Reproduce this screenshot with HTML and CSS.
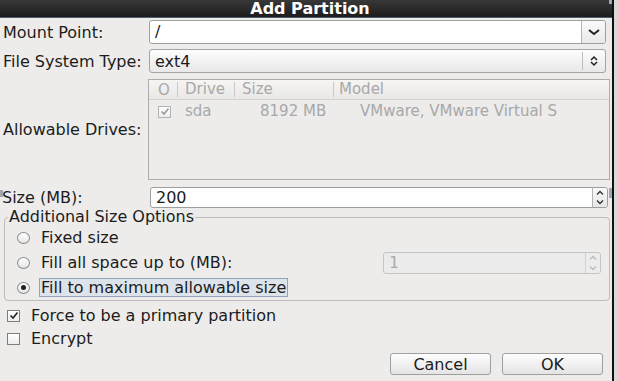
FILE: index.html
```html
<!DOCTYPE html>
<html lang="en">
<head>
    <meta charset="UTF-8">
    <title>Add Partition</title>
    <link rel="stylesheet" href="styles.css">
</head>
<body>

    <div class="window">
        <div class="titlebar">Add Partition</div>

        <div class="dialog">
            <!-- Mount point -->
            <div class="row row-mount">
                <div class="label">Mount Point:</div>
                <div class="combo-entry">
                    <div class="entry-text">/</div>
                    <div class="combo-btn">
                        <svg width="12" height="8" viewBox="0 0 12 8"><path d="M1 2 L6 6 L11 2" fill="none" stroke="#222" stroke-width="2"/></svg>
                    </div>
                </div>
            </div>

            <!-- File system -->
            <div class="row row-fs">
                <div class="label">File System Type:</div>
                <div class="combo-box">
                    <div class="combo-text">ext4</div>
                    <div class="combo-sep"></div>
                    <div class="combo-arrows">
                        <svg width="10" height="12" viewBox="0 0 10 12"><path d="M2 5 L5 2 L8 5 M2 7 L5 10 L8 7" fill="none" stroke="#222" stroke-width="1.5"/></svg>
                    </div>
                </div>
            </div>

            <!-- Drives -->
            <div class="row row-drives">
                <div class="label">Allowable Drives:</div>
                <div class="tree">
                    <div class="tree-head">
                        <div class="col col-sel">O</div>
                        <div class="col col-drive">Drive</div>
                        <div class="col col-size">Size</div>
                        <div class="col col-model">Model</div>
                    </div>
                    <div class="tree-row">
                        <div class="col col-sel"><span class="check check-off">
                            <svg width="10" height="9" viewBox="0 0 10 9"><path d="M1.5 4.5 L4 7 L8.5 1.5" fill="none" stroke="#9a9a9a" stroke-width="1.6"/></svg>
                        </span></div>
                        <div class="col col-drive">sda</div>
                        <div class="col col-size">8192 MB</div>
                        <div class="col col-model">VMware, VMware Virtual S</div>
                    </div>
                </div>
            </div>

            <!-- Size -->
            <div class="row row-size">
                <div class="label label-size">Size (MB):</div>
                <div class="spin">
                    <div class="spin-text">200</div>
                    <div class="spin-btns">
                        <svg width="10" height="6" viewBox="0 0 10 6"><path d="M2 4.5 L5 1.5 L8 4.5" fill="none" stroke="#333" stroke-width="1.4"/></svg>
                        <svg width="10" height="6" viewBox="0 0 10 6"><path d="M2 1.5 L5 4.5 L8 1.5" fill="none" stroke="#333" stroke-width="1.4"/></svg>
                    </div>
                </div>
            </div>

            <!-- Additional size options -->
            <fieldset class="options">
                <legend>Additional Size Options</legend>
                <div class="option">
                    <span class="radio"></span>
                    <span class="option-text">Fixed size</span>
                </div>
                <div class="option">
                    <span class="radio"></span>
                    <span class="option-text">Fill all space up to (MB):</span>
                    <div class="spin spin-disabled">
                        <div class="spin-text">1</div>
                        <div class="spin-btns">
                            <svg width="10" height="6" viewBox="0 0 10 6"><path d="M2 4.5 L5 1.5 L8 4.5" fill="none" stroke="#bbb" stroke-width="1.4"/></svg>
                            <svg width="10" height="6" viewBox="0 0 10 6"><path d="M2 1.5 L5 4.5 L8 1.5" fill="none" stroke="#bbb" stroke-width="1.4"/></svg>
                        </div>
                    </div>
                </div>
                <div class="option">
                    <span class="radio radio-on"></span>
                    <span class="option-text focused">Fill to maximum allowable size</span>
                </div>
            </fieldset>

            <!-- Checks -->
            <div class="checkrow checkrow-first">
                <span class="check">
                    <svg width="10" height="9" viewBox="0 0 10 9"><path d="M1.5 4.5 L4 7 L8.5 1.5" fill="none" stroke="#222" stroke-width="1.6"/></svg>
                </span>
                <span>Force to be a primary partition</span>
            </div>
            <div class="checkrow">
                <span class="check"></span>
                <span>Encrypt</span>
            </div>

            <div class="buttons">
                <button class="btn">Cancel</button>
                <button class="btn">OK</button>
            </div>
        </div>

        <!-- resize grips drawn over the edge -->
        <div class="grip grip-top"></div>
        <div class="grip grip-right"></div>
        <div class="grip grip-left"></div>
    </div>

</body>
</html>
```

FILE: styles.css
```css
body {
    margin: 0;
    padding: 0;
    background-color: #d9d9d9;
    font-family: 'DejaVu Sans', 'Liberation Sans', sans-serif;
    font-size: 16px;
    color: #1c1c1c;
}

.window {
    position: relative;
    width: 612px;
    height: 381px;
    border-right: 2px solid #111;
    background-color: #edeceb;
    overflow: hidden;
}

.titlebar {
    height: 17px;
    line-height: 17px;
    background: linear-gradient(#383838, #1c1c1c);
    border-bottom: 1px solid #4d5d72;
    color: #fff;
    font-weight: bold;
    text-align: center;
    padding-left: 8px;
}

.dialog {
    padding: 2px 0 0 0;
}

.row {
    display: flex;
    align-items: center;
}

.label {
    width: 149px;
    padding-left: 3px;
    box-sizing: border-box;
    flex-shrink: 0;
}

.row-fs {
    margin-top: 5px;
}

.row-drives {
    margin-top: 6px;
}

.row-size {
    margin-top: 7px;
}

.label-size {
    padding-left: 2px;
    width: 150px;
}

/* mount point combo */
.combo-entry {
    display: flex;
    flex: 1;
    height: 24px;
    margin-right: 6px;
    border: 1px solid #9e9e9e;
    border-radius: 3px;
    box-sizing: border-box;
    background: #fff;
}

.entry-text {
    flex: 1;
    padding-left: 5px;
    line-height: 22px;
}

.combo-btn {
    width: 23px;
    border-left: 1px solid #b4b4b4;
    background: linear-gradient(#fafafa, #e9e9e9);
    border-radius: 0 3px 3px 0;
    display: flex;
    align-items: center;
    justify-content: center;
}

/* fs type combo */
.combo-box {
    display: flex;
    align-items: center;
    flex: 1;
    height: 24px;
    margin-right: 6px;
    border: 1px solid #a4a4a4;
    border-radius: 3px;
    box-sizing: border-box;
    background: linear-gradient(#fdfdfd, #e8e8e8);
}

.combo-text {
    flex: 1;
    padding-left: 5px;
}

.combo-sep {
    width: 1px;
    height: 18px;
    background: #bcbcbc;
}

.combo-arrows {
    width: 22px;
    display: flex;
    justify-content: center;
}

/* drives tree */
.tree {
    flex: 1;
    height: 101px;
    margin-right: 2px;
    margin-left: -1px;
    border: 1px solid #acacac;
    box-sizing: border-box;
    color: #a8a8a8;
    font-size: 15px;
}

.tree-head {
    display: flex;
    align-items: center;
    height: 19px;
    background: linear-gradient(#f6f5f4, #e9e8e7);
    border-bottom: 1px solid #d2d2d2;
}

.tree-head .col + .col {
    border-left: 1px solid #c8c8c8;
    line-height: 15px;
}

.tree-row {
    display: flex;
    align-items: center;
    height: 22px;
}

.col {
    box-sizing: border-box;
    white-space: nowrap;
}

.col-sel {
    width: 28px;
    padding-left: 9px;
}

.col-drive {
    width: 57px;
    padding-left: 7px;
}

.col-size {
    width: 99px;
    padding-left: 7px;
}

.tree-row .col-size {
    padding-left: 26px;
}

.col-model {
    padding-left: 5px;
}

.tree-row .col-model {
    padding-left: 27px;
}

.tree-row .col-drive {
    padding-left: 8px;
}

/* size spin */
.spin {
    display: flex;
    flex: 1;
    height: 21px;
    margin-right: 4px;
    border: 1px solid #9e9e9e;
    border-radius: 3px;
    box-sizing: border-box;
    background: #fff;
}

.spin-text {
    flex: 1;
    padding-left: 5px;
    line-height: 19px;
}

.spin-btns {
    width: 14px;
    border-left: 1px solid #b4b4b4;
    background: linear-gradient(#fafafa, #e6e6e6);
    display: flex;
    flex-direction: column;
    align-items: center;
    justify-content: space-around;
    border-radius: 0 3px 3px 0;
}

/* options frame */
.options {
    margin: 1px 2px 0 4px;
    padding: 0;
    border: 1px solid #bdbdbd;
    border-radius: 4px;
}

.options legend {
    padding: 0 1px;
    margin-left: 3px;
    line-height: 16px;
}

.option {
    display: flex;
    align-items: center;
    height: 25px;
    padding-left: 12px;
}

.radio {
    width: 11px;
    height: 10px;
    border: 1px solid #8c8c8c;
    border-radius: 50%;
    background: linear-gradient(#fff, #e6e6e6);
    margin-right: 9px;
    position: relative;
}

.radio-on::after {
    content: "";
    position: absolute;
    left: 3px;
    top: 2.5px;
    width: 5px;
    height: 5px;
    border-radius: 50%;
    background: #222;
}

.option-text {
    padding: 0 1px;
    line-height: 17px;
    border: 1px solid transparent;
}

.option-text.focused {
    background: #dde3eb;
    border-color: #93a3b8;
}

.spin-disabled {
    flex: none;
    width: 218px;
    height: 22px;
    margin-left: auto;
    margin-right: 8px;
    background: #ebebeb;
    border-color: #c4c4c4;
    color: #aaa;
    font-family: 'DejaVu Sans Mono', monospace;
}

.spin-disabled .spin-text {
    line-height: 20px;
}

.spin-disabled .spin-btns {
    border-left-color: #d0d0d0;
    background: #ececec;
}

/* checkboxes */
.checkrow {
    display: flex;
    align-items: center;
    height: 23px;
    padding-left: 7px;
}

.checkrow-first {
    margin-top: 3px;
}

.check {
    width: 11px;
    height: 10px;
    border: 1px solid #7e7e7e;
    background: linear-gradient(#fff, #ececec);
    margin-right: 11px;
    display: flex;
    align-items: center;
    justify-content: center;
}

.check-off {
    display: inline-flex;
    border-color: #b3b3b3;
}

/* dialog buttons */
.buttons {
    display: flex;
    justify-content: flex-end;
    gap: 11px;
    margin-top: 3px;
    margin-right: 9px;
}

.btn {
    width: 101px;
    height: 22px;
    border: 1px solid #9f9f9f;
    border-radius: 3px;
    background: linear-gradient(#fdfdfd, #e4e4e4);
    font-family: 'DejaVu Sans', sans-serif;
    font-size: 16px;
    color: #1c1c1c;
    padding: 0;
}

/* grips over the frame edge */
.grip {
    position: absolute;
    background: #a2a5ac;
}

.grip-top {
    right: -2px;
    top: 0;
    width: 5px;
    height: 4px;
}

.grip-right {
    right: -2px;
    top: 188px;
    width: 5px;
    height: 10px;
}

.grip-left {
    left: 0;
    top: 190px;
    width: 3px;
    height: 7px;
}
```
